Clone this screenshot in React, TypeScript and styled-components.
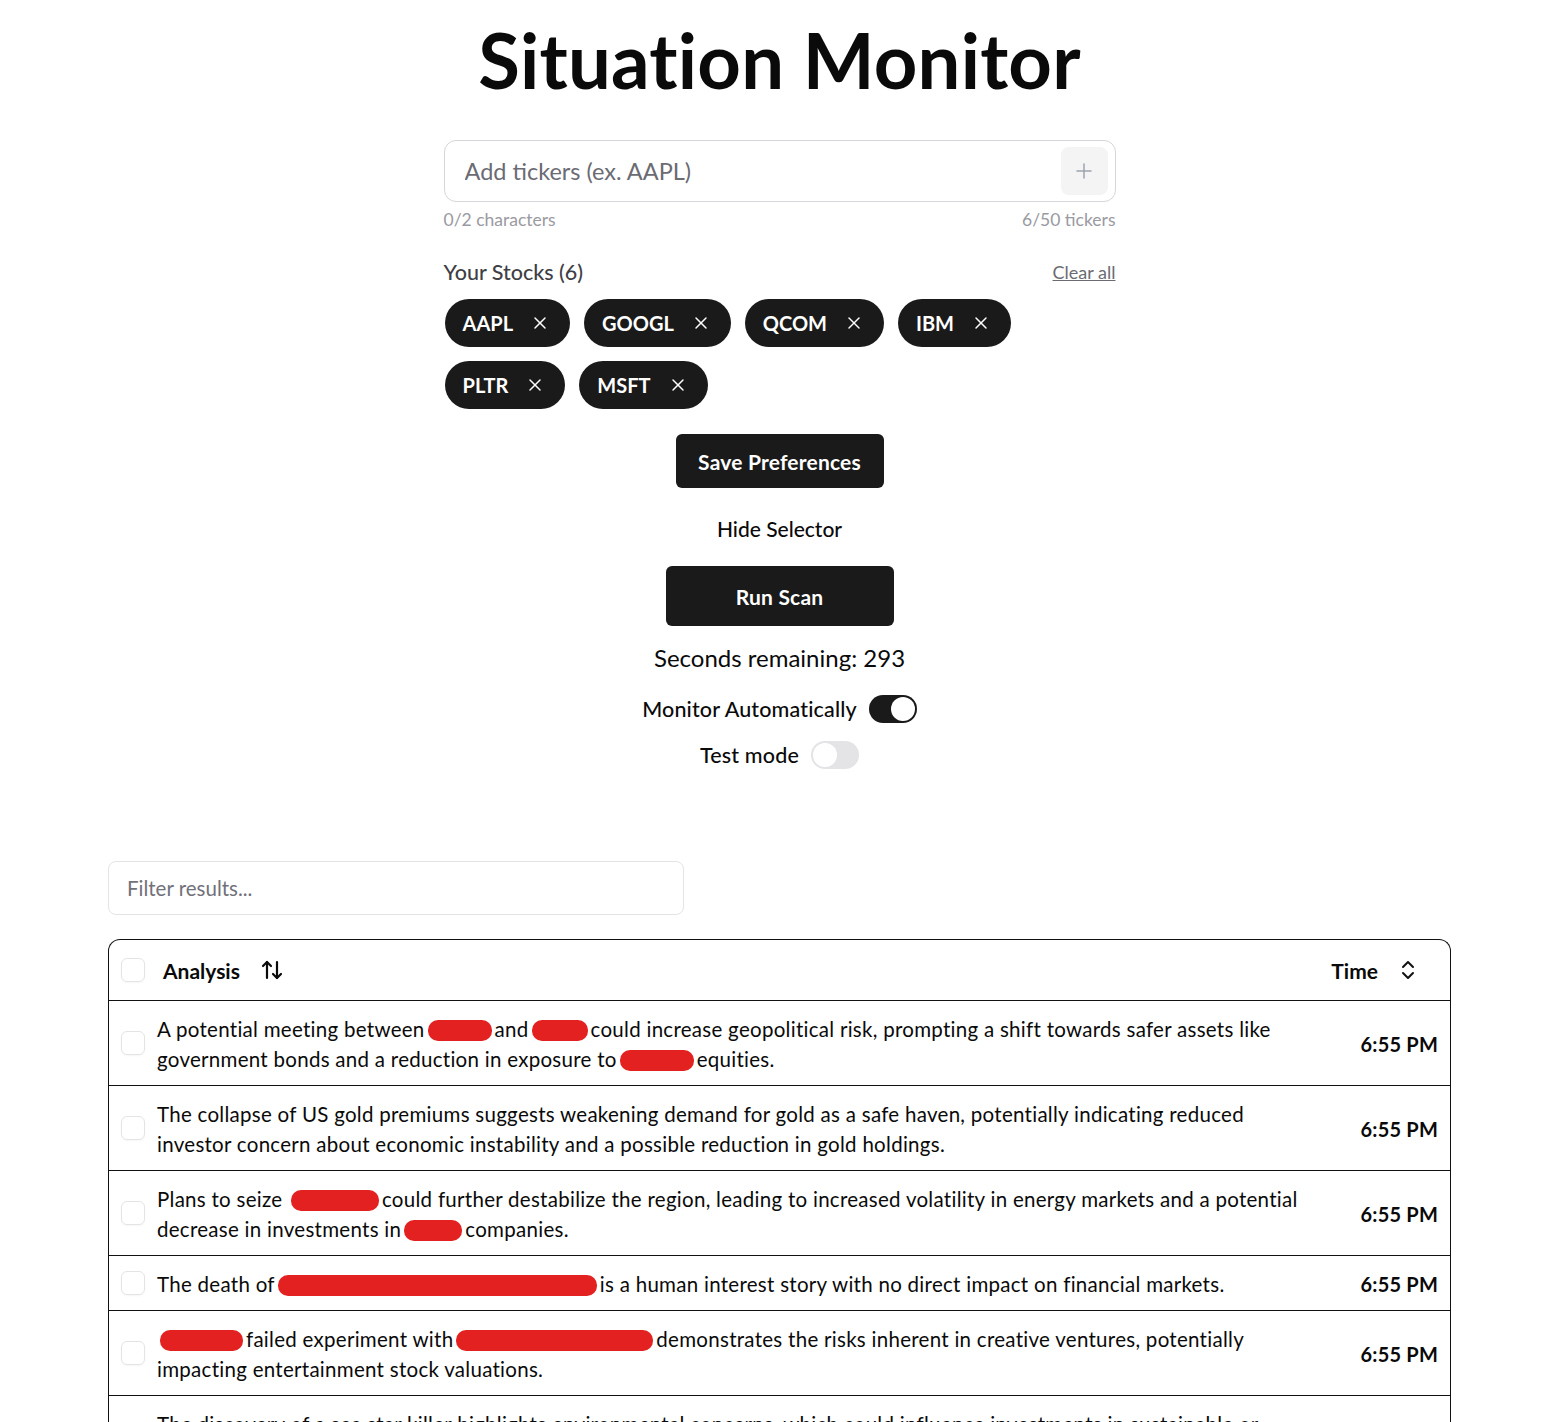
import React from "react";
import styled, { createGlobalStyle } from "styled-components";
import { ArrowUpDown, Plus, X } from "lucide-react";

const GlobalStyle = createGlobalStyle`
  body {
    margin: 0;
    background: #fff;
    color: #0a0a0a;
    font-family: Lato, "Noto Sans", sans-serif;
  }
  * { box-sizing: border-box; }
`;

const Page = styled.div`
  padding: 0 92px 0 108px;
`;

const Title = styled.h1`
  margin: 0;
  padding-top: 22px;
  font-size: 76px;
  line-height: 76px;
  font-weight: 700;
  text-align: center;
  letter-spacing: 0.2px;
`;

const Selector = styled.div`
  width: 672px;
  margin: 42px auto 0;
`;

const TickerBox = styled.div`
  height: 62px;
  border: 1px solid #d6d6da;
  border-radius: 12px;
  display: flex;
  align-items: center;
  padding: 0 7px 0 18px;
`;

const TickerInput = styled.input`
  flex: 1;
  border: none;
  outline: none;
  font-family: inherit;
  font-size: 23.5px;
  color: #111;
  &::placeholder { color: #6b6b73; }
`;

const AddButton = styled.button`
  width: 47px;
  height: 48px;
  border: none;
  border-radius: 8px;
  background: #f4f4f5;
  color: #9ca3af;
  display: flex;
  align-items: center;
  justify-content: center;
`;

const Counters = styled.div`
  display: flex;
  justify-content: space-between;
  margin-top: 6px;
  font-size: 17.5px;
  line-height: 24px;
  color: #9a9aa2;
`;

const StocksHead = styled.div`
  display: flex;
  justify-content: space-between;
  align-items: center;
  margin-top: 26px;
  height: 28px;
`;

const StocksLabel = styled.span`
  font-size: 21.5px;
  font-weight: 500;
  color: #3f3f46;
`;

const ClearAll = styled.a`
  font-size: 18px;
  color: #6b6b73;
  text-decoration: underline;
  cursor: pointer;
`;

const Chips = styled.div`
  display: flex;
  flex-wrap: wrap;
  gap: 14px;
  margin-top: 13px;
  padding-left: 1px;
`;

const Chip = styled.span`
  height: 48px;
  display: inline-flex;
  align-items: center;
  gap: 17px;
  padding: 0 20px 0 18px;
  border-radius: 999px;
  background: #1a1a1a;
  color: #fff;
  font-size: 20px;
  font-weight: 700;
`;

const Controls = styled.div`
  display: flex;
  flex-direction: column;
  align-items: center;
`;

const DarkButton = styled.button<{ $w: number; $h: number; $top: number }>`
  width: ${(p) => p.$w}px;
  height: ${(p) => p.$h}px;
  margin-top: ${(p) => p.$top}px;
  border: none;
  border-radius: 6px;
  background: #1a1a1a;
  color: #fff;
  font-family: inherit;
  font-size: 21px;
  font-weight: 700;
  letter-spacing: 0.2px;
`;

const LinkButton = styled.button`
  margin-top: 26px;
  border: none;
  background: none;
  padding: 0;
  height: 28px;
  font-family: inherit;
  font-size: 21px;
  font-weight: 500;
  color: #0a0a0a;
`;

const Countdown = styled.div`
  margin-top: 17px;
  font-size: 24px;
  line-height: 30px;
`;

const SwitchRow = styled.label<{ $top: number }>`
  display: flex;
  align-items: center;
  gap: 12px;
  margin-top: ${(p) => p.$top}px;
  font-size: 21.5px;
  font-weight: 500;
  letter-spacing: 0.15px;
`;

const Track = styled.span<{ $on: boolean }>`
  width: 48px;
  height: 28px;
  border-radius: 14px;
  padding: 2px;
  display: flex;
  justify-content: ${(p) => (p.$on ? "flex-end" : "flex-start")};
  background: ${(p) => (p.$on ? "#1a1a1a" : "#e4e4e7")};
`;

const Knob = styled.span`
  width: 24px;
  height: 24px;
  border-radius: 50%;
  background: #fff;
`;

const FilterInput = styled.input`
  display: block;
  width: 576px;
  height: 54px;
  margin-top: 92px;
  padding: 0 18px;
  border: 1px solid #e4e4e7;
  border-radius: 8px;
  outline: none;
  font-family: inherit;
  font-size: 20.5px;
  &::placeholder { color: #71717a; }
`;

const Table = styled.div`
  margin-top: 24px;
  border: 1px solid #111;
  border-bottom: none;
  border-radius: 12px 12px 0 0;
  overflow: hidden;
`;

const Row = styled.div<{ $head?: boolean }>`
  display: grid;
  grid-template-columns: 48px 1fr 140px;
  align-items: center;
  min-height: ${(p) => (p.$head ? "61px" : "54px")};
  border-bottom: 1px solid #111;
`;

const CheckCell = styled.div`
  padding-left: 12px;
  display: flex;
`;

const Box = styled.span`
  width: 24px;
  height: 24px;
  border: 1px solid #e4e4e7;
  border-radius: 6px;
  box-shadow: 0 1px 2px rgba(0, 0, 0, 0.04);
`;

const HeadButton = styled.div`
  display: flex;
  align-items: center;
  gap: 20px;
  font-size: 21px;
  font-weight: 700;
`;

const AnalysisHead = styled(HeadButton)`
  padding-left: 6px;
`;

const TimeHead = styled(HeadButton)`
  justify-content: flex-end;
  gap: 22px;
  padding-right: 34px;
`;

const Analysis = styled.div`
  padding: 13px 0 11px;
  font-size: 20.5px;
  line-height: 30px;
  letter-spacing: 0.28px;
`;

const Time = styled.div`
  text-align: right;
  padding: 2px 12px 0 0;
  font-size: 20px;
  font-weight: 700;
  letter-spacing: 0.2px;
`;

const Redact = styled.span<{ $w: number }>`
  display: inline-block;
  width: ${(p) => p.$w}px;
  height: 21px;
  margin: 0 3px;
  vertical-align: -4px;
  border-radius: 10px;
  background: #e42121;
`;

const SortChevrons = () => (
  <svg width="16" height="20" viewBox="0 0 16 20" fill="none" stroke="#111" strokeWidth="2" strokeLinecap="round" strokeLinejoin="round">
    <path d="M3 7l5-5 5 5" />
    <path d="M3 13l5 5 5-5" />
  </svg>
);

const R = ({ w }: { w: number }) => <Redact $w={w} />;

const tickers = ["AAPL", "GOOGL", "QCOM", "IBM", "PLTR", "MSFT"];

const rows: React.ReactNode[] = [
  <>
    A potential meeting between<R w={64} />and<R w={56} />could increase geopolitical risk, prompting a shift towards safer assets like
    government bonds and a reduction in exposure to<R w={74} />equities.
  </>,
  <>
    The collapse of US gold premiums suggests weakening demand for gold as a safe haven, potentially indicating reduced investor
    concern about economic instability and a possible reduction in gold holdings.
  </>,
  <>
    Plans to seize <R w={88} />could further destabilize the region, leading to increased volatility in energy markets and a potential
    decrease in investments in<R w={58} />companies.
  </>,
  <>
    The death of<R w={319} />is a human interest story with no direct impact on financial markets.
  </>,
  <>
    <R w={83} />failed experiment with<R w={197} />demonstrates the risks inherent in creative ventures, potentially impacting
    entertainment stock valuations.
  </>,
  <>
    The discovery of a sea star killer highlights environmental concerns, which could influence investments in sustainable or
    conservation-focused companies.
  </>,
];

export default function App() {
  return (
    <>
      <GlobalStyle />
      <Page>
        <Title>Situation Monitor</Title>
        <Selector>
          <TickerBox>
            <TickerInput placeholder="Add tickers (ex. AAPL)" />
            <AddButton>
              <Plus size={24} strokeWidth={1.5} />
            </AddButton>
          </TickerBox>
          <Counters>
            <span>0/2 characters</span>
            <span>6/50 tickers</span>
          </Counters>
          <StocksHead>
            <StocksLabel>Your Stocks (6)</StocksLabel>
            <ClearAll>Clear all</ClearAll>
          </StocksHead>
          <Chips>
            {tickers.map((t) => (
              <Chip key={t}>
                {t}
                <X size={20} strokeWidth={1.75} />
              </Chip>
            ))}
          </Chips>
        </Selector>
        <Controls>
          <DarkButton $w={208} $h={54} $top={25}>Save Preferences</DarkButton>
          <LinkButton>Hide Selector</LinkButton>
          <DarkButton $w={228} $h={60} $top={24}>Run Scan</DarkButton>
          <Countdown>Seconds remaining: 293</Countdown>
          <SwitchRow $top={22}>
            Monitor Automatically
            <Track $on>
              <Knob />
            </Track>
          </SwitchRow>
          <SwitchRow $top={18}>
            Test mode
            <Track $on={false}>
              <Knob />
            </Track>
          </SwitchRow>
        </Controls>
        <FilterInput placeholder="Filter results..." />
        <Table>
          <Row $head>
            <CheckCell><Box /></CheckCell>
            <AnalysisHead>
              Analysis
              <ArrowUpDown size={24} strokeWidth={2.2} />
            </AnalysisHead>
            <TimeHead>
              Time
              <SortChevrons />
            </TimeHead>
          </Row>
          {rows.map((r, i) => (
            <Row key={i}>
              <CheckCell><Box /></CheckCell>
              <Analysis>{r}</Analysis>
              <Time>6:55 PM</Time>
            </Row>
          ))}
        </Table>
      </Page>
    </>
  );
}
